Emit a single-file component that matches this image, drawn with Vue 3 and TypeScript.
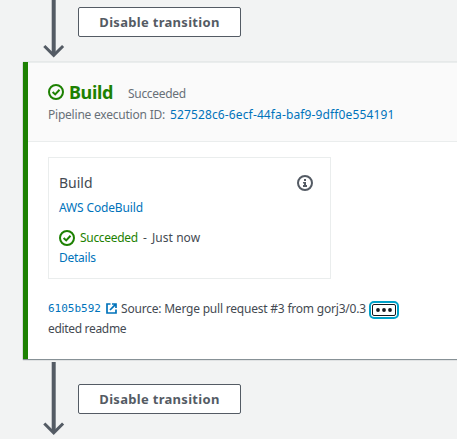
<script setup lang="ts">
interface Commit {
  hash: string
  message: string
  detail: string
}

const executionId = '527528c6-6ecf-44fa-baf9-9dff0e554191'
const commit: Commit = {
  hash: '6105b592',
  message: 'Source: Merge pull request #3 from gorj3/0.3',
  detail: 'edited readme',
}
</script>

<template>
  <main class="pipeline">
    <div class="transition first">
      <svg class="arrow" width="22" height="59" viewBox="0 0 22 59">
        <path d="M10.7 0V54" stroke-width="4" />
        <path d="M1.3 46L10.7 55.4L20.1 46" stroke-width="3" />
      </svg>
      <button class="transition-button">Disable transition</button>
    </div>

    <section class="stage">
      <header class="stage-header">
        <div class="title-row">
          <svg class="check" width="16" height="16" viewBox="0 0 16 16">
            <circle cx="8" cy="8" r="7" />
            <path d="M4.6 8L7.2 10.4L11.5 5.8" />
          </svg>
          <h2>Build</h2>
          <span class="stage-status">Succeeded</span>
        </div>
        <div class="execution">
          <span class="label">Pipeline execution ID:</span>
          <a class="id">{{ executionId }}</a>
        </div>
      </header>

      <div class="stage-body">
        <article class="action">
          <div class="action-head">
            <h3>Build</h3>
            <svg class="info" width="16" height="16" viewBox="0 0 16 16">
              <circle cx="8" cy="8" r="7" />
              <path d="M7 4H9V6H7ZM6 7H9V10H10V12H6V10H7V8.6H6Z" />
            </svg>
          </div>
          <a class="provider">AWS CodeBuild</a>
          <div class="action-status">
            <svg class="check" width="16" height="16" viewBox="0 0 16 16">
              <circle cx="8" cy="8" r="7" />
              <path d="M4.6 8L7.2 10.4L11.5 5.8" />
            </svg>
            <span class="ok">Succeeded</span>
            <span class="dash">-</span>
            <span class="when">Just now</span>
          </div>
          <a class="details">Details</a>
        </article>

        <div class="commit">
          <a class="hash">{{ commit.hash }}</a>
          <svg class="external" width="11" height="11" viewBox="0 0 11 11">
            <path d="M4.5 1H1V10H10V6.5M6 1H10V5M9.8 1.2L4 7" />
          </svg>
          <span class="message">{{ commit.message }}</span>
          <button class="more" aria-label="More">
            <svg width="18" height="6" viewBox="0 0 18 6">
              <circle cx="3" cy="3" r="1.9" />
              <circle cx="9" cy="3" r="1.9" />
              <circle cx="15" cy="3" r="1.9" />
            </svg>
          </button>
        </div>
        <div class="commit-detail"><span>{{ commit.detail }}</span></div>
      </div>
    </section>

    <div class="transition last">
      <svg class="arrow" width="22" height="74" viewBox="0 0 22 74">
        <path d="M10.7 0V70" stroke-width="4" />
        <path d="M1.3 61.5L10.7 70.9L20.1 61.5" stroke-width="3" />
      </svg>
      <button class="transition-button">Disable transition</button>
    </div>
  </main>
</template>

<style>
body {
  overflow: hidden;
  background: #f2f3f3;
}
</style>

<style scoped>
* {
  box-sizing: border-box;
}

.pipeline {
  height: 439px;
  overflow: hidden;
  background: #f2f3f3;
  color: #444a52;
  font: 12px/20px "Noto Sans", "Open Sans", sans-serif;
  white-space: nowrap;
}

.transition {
  display: flex;
  align-items: flex-start;
  padding-left: 43px;
}

.first {
  height: 62px;
}

.last {
  padding-top: 3px;
}

.arrow {
  flex: none;
  fill: none;
  stroke: #545b64;
}

.transition-button {
  width: 163px;
  height: 30px;
  margin: 7px 0 0 13px;
  padding: 0;
  border: 1px solid #545b64;
  border-radius: 2px;
  background: #fff;
  color: #545b64;
  font: 700 13px/28px "Noto Sans", sans-serif;
  letter-spacing: 0.3px;
}

.last .transition-button {
  margin-top: 22px;
}

.stage {
  height: 297px;
  margin-left: 23px;
  border-left: 5px solid #1d8102;
  background: #fff;
  box-shadow: 0 1px 1px #879196, 0 0 1px #aab7b8;
}

.stage-header {
  height: 80px;
  padding: 18px 0 0 20px;
  border-top: 1px solid #eaeded;
  border-bottom: 1px solid #eaeded;
  background: #fafafa;
}

.title-row {
  display: flex;
  height: 24px;
  align-items: center;
}

.check {
  flex: none;
  fill: none;
  stroke: #1d8102;
  stroke-width: 2;
}

.title-row .check {
  margin-top: -2px;
}

h2,
h3 {
  margin: 0;
}

h2 {
  width: 44px;
  margin: -2px 0 0 5px;
  color: #1d8102;
  font-size: 18px;
  line-height: 24px;
  letter-spacing: -0.35px;
}

.stage-status {
  margin: 2px 0 0 15px;
  color: #687078;
  letter-spacing: -0.3px;
}

.execution {
  display: flex;
  color: #687078;
}

.label {
  width: 122px;
  letter-spacing: -0.22px;
}

.id,
.provider,
.details,
.hash {
  color: #0073bb;
}

.id {
  letter-spacing: 0.13px;
}

.stage-body {
  padding: 15px 0 0 20px;
}

.action {
  width: 283px;
  height: 122px;
  padding: 14px 17px 0 10px;
  border: 1px solid #eaeded;
}

.action-head {
  display: flex;
  height: 22px;
  align-items: center;
  justify-content: space-between;
}

h3 {
  font-size: 14px;
  font-weight: 400;
  line-height: 22px;
}

.provider {
  display: block;
  margin-top: 4px;
  letter-spacing: -0.15px;
}

.info circle {
  fill: none;
  stroke: #545b64;
  stroke-width: 2;
}

.info path {
  fill: #545b64;
}

.action-status {
  display: flex;
  height: 20px;
  margin-top: 10px;
  align-items: center;
}

.ok {
  width: 57px;
  margin-left: 5px;
  color: #1d8102;
  letter-spacing: -0.3px;
}

.dash {
  width: 4px;
  margin: 0 5px 0 6px;
}

.when {
  letter-spacing: 0.05px;
}

.details {
  display: block;
  letter-spacing: -0.25px;
}

.commit {
  display: flex;
  height: 20px;
  margin-top: 20px;
  align-items: center;
}

.hash {
  width: 53px;
  font: 11px/20px "DejaVu Sans Mono", monospace;
}

.external {
  flex: none;
  margin: -2px 4px 0 5px;
  fill: none;
  stroke: #0073bb;
  stroke-width: 1.7;
}

.message {
  width: 245px;
  letter-spacing: -0.21px;
}

.more {
  display: flex;
  width: 24px;
  height: 12px;
  margin: 2px 0 0 6px;
  padding: 0;
  align-items: center;
  justify-content: center;
  border: 1px solid #16191f;
  border-radius: 2px;
  outline: 2px solid #00a1c9;
  outline-offset: 1px;
  background: #fff;
}

.more svg {
  fill: #16191f;
}

.commit-detail {
  letter-spacing: -0.32px;
}
</style>
